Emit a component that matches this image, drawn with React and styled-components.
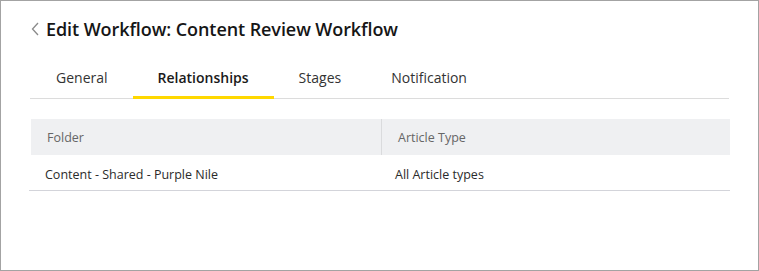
import React from "react";
import styled, { createGlobalStyle } from "styled-components";

const Global = createGlobalStyle`
  html, body { margin: 0; padding: 0; background: #fff; }
  * { box-sizing: border-box; }
  body { font-family: "Open Sans", "Noto Sans", sans-serif; }
`;

const Frame = styled.div`
  width: 759px;
  height: 271px;
  border: 1px solid #a3a3a3;
  background: #fff;
  padding: 0 29px 0 29px;
`;

const Header = styled.div`
  display: flex;
  align-items: center;
  height: 55px;
  gap: 7px;
`;

const Back = styled.button`
  display: flex;
  align-items: center;
  justify-content: center;
  border: 0;
  background: none;
  padding: 0;
  width: 8px;
  height: 14px;
  margin-left: 1px;
  cursor: pointer;
`;

const Title = styled.h1`
  margin: 0;
  font-size: 18px;
  font-weight: 600;
  color: #161616;
  letter-spacing: -0.08px;
`;

const Tabs = styled.div`
  display: flex;
  margin-top: 5px;
  border-bottom: 1px solid #dcdcdc;
`;

const Tab = styled.div`
  height: 38px;
  padding: 0 25px 3px;
  display: flex;
  align-items: center;
  font-size: 14px;
  font-weight: ${(p) => (p.$active ? 600 : 400)};
  color: ${(p) => (p.$active ? "#1a1a1a" : "#333")};
  border-bottom: 3px solid ${(p) => (p.$active ? "#ffd800" : "transparent")};
  margin-bottom: -1px;
  &:first-child { padding-left: 26px; }
`;

const Table = styled.div`
  margin-top: 20px;
  display: grid;
  grid-template-columns: 350px 1fr;
  width: 699px;
  margin-left: 1px;
`;

const HeadCell = styled.div`
  height: 36px;
  background: #eff0f2;
  display: flex;
  align-items: center;
  padding-left: ${(p) => p.$pl}px;
  font-size: 12.5px;
  color: #666;
  border-left: ${(p) => (p.$divider ? "1px solid #dadbdd" : "none")};
`;

const Cell = styled.div`
  height: 36px;
  display: flex;
  align-items: center;
  padding-left: ${(p) => p.$pl}px;
  padding-top: 4px;
  font-size: 12.5px;
  color: #2b2b2b;
  border-bottom: 1px solid #d3d4da;
  margin-left: ${(p) => (p.$first ? -2 : 0)}px;
`;

export default function App() {
  return (
    <>
      <Global />
      <Frame>
        <Header>
          <Back aria-label="Back">
            <svg width="8" height="14" viewBox="0 0 8 14">
              <path d="M7 1 L1.5 7 L7 13" fill="none" stroke="#8a8a8a" strokeWidth="1.3" />
            </svg>
          </Back>
          <Title>Edit Workflow: Content Review Workflow</Title>
        </Header>
        <Tabs>
          <Tab>General</Tab>
          <Tab $active>Relationships</Tab>
          <Tab>Stages</Tab>
          <Tab>Notification</Tab>
        </Tabs>
        <Table>
          <HeadCell $pl={16}>Folder</HeadCell>
          <HeadCell $pl={16} $divider>Article Type</HeadCell>
          <Cell $pl={16} $first>Content - Shared - Purple Nile</Cell>
          <Cell $pl={14}>All Article types</Cell>
        </Table>
      </Frame>
    </>
  );
}
